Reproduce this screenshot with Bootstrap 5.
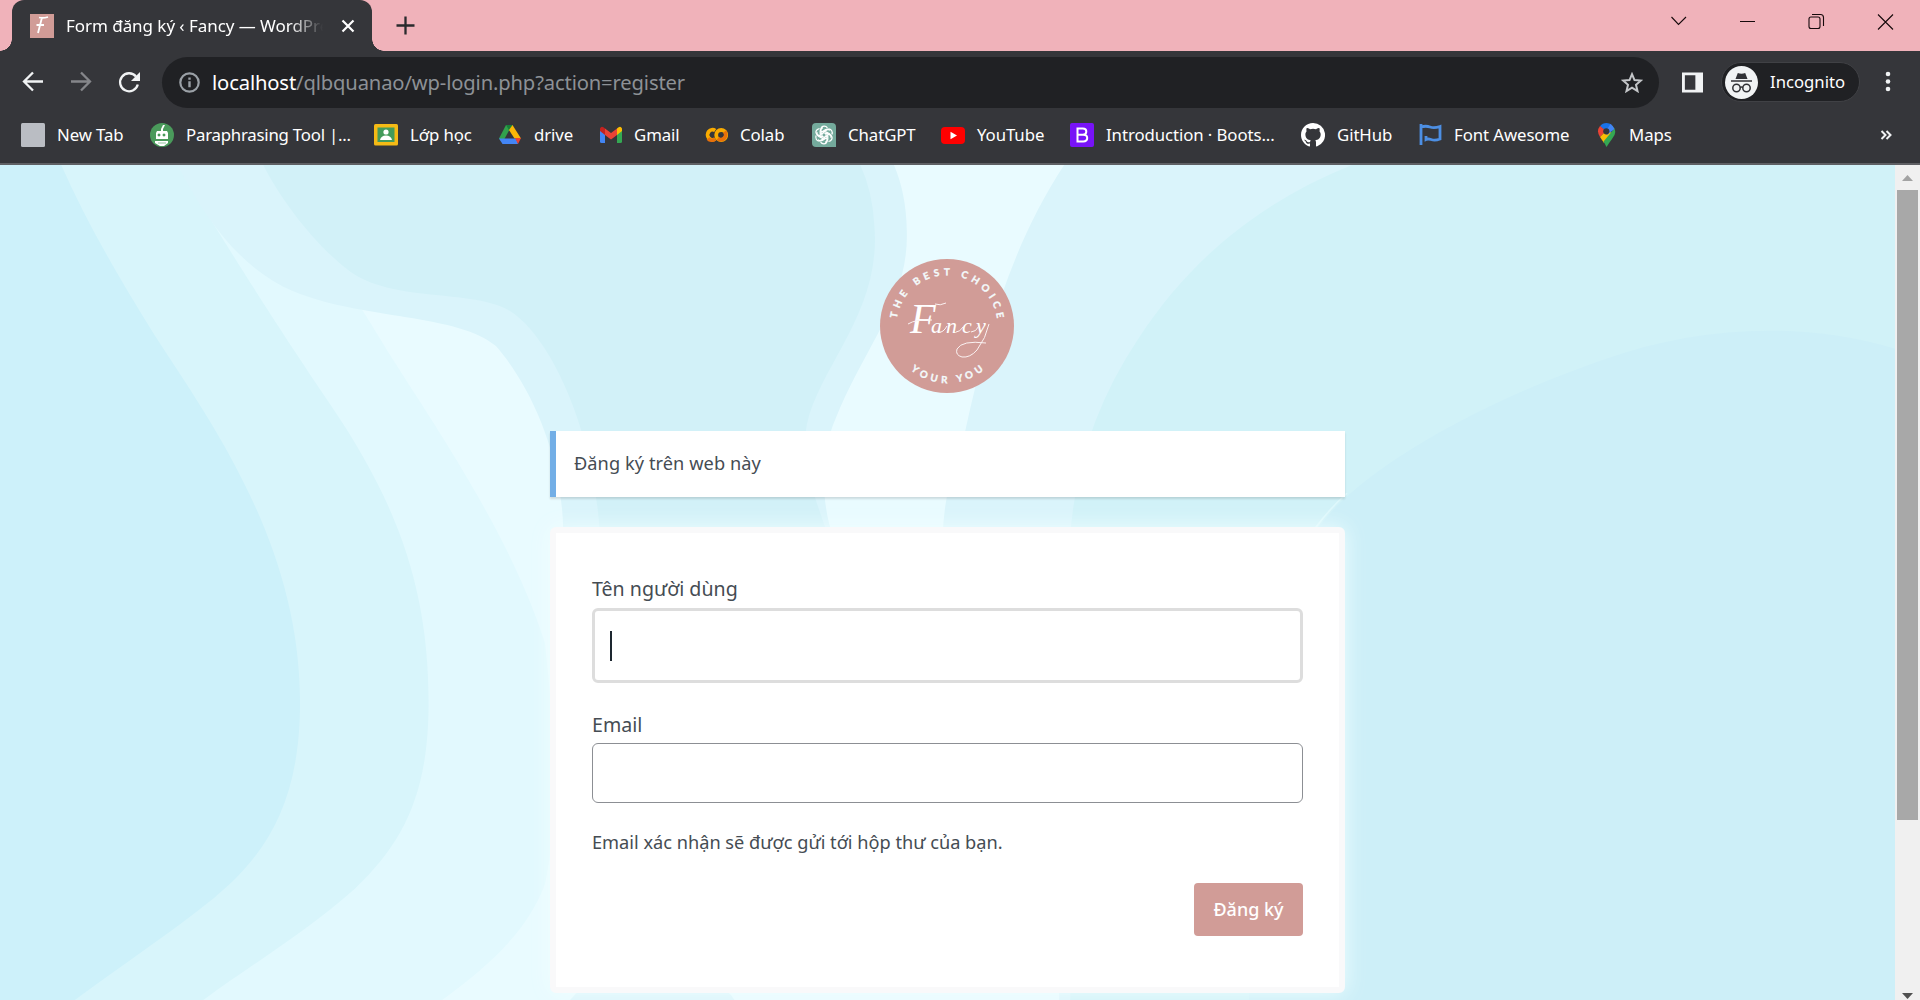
<!DOCTYPE html>
<html lang="vi">
<head>
<meta charset="utf-8">
<meta name="viewport" content="width=device-width, initial-scale=1">
<title>Form đăng ký ‹ Fancy — WordPress</title>
<link href="https://cdn.jsdelivr.net/npm/bootstrap@5.3.0/dist/css/bootstrap.min.css" rel="stylesheet">
<style>
html,body{height:1000px;overflow:hidden}
body{font-family:"Noto Sans","Open Sans",sans-serif;color:#454c53}
svg{display:block;flex:none}
.tabstrip{height:51px;background:#f0b2ba}
.tab-active{width:360px;height:51px;margin-left:12px;padding:0 17px 0 18px;background:#35363a;border-radius:12px 12px 0 0;position:relative}
.tab-active::before,.tab-active::after{content:"";position:absolute;bottom:0;width:12px;height:12px}
.tab-active::before{left:-12px;background:radial-gradient(circle at 0 0,transparent 11.5px,#35363a 12px)}
.tab-active::after{right:-12px;background:radial-gradient(circle at 100% 0,transparent 11.5px,#35363a 12px)}
.tab-title{width:257px;margin-left:12px;color:#fff;font-size:17px;letter-spacing:-.05px;line-height:50px;-webkit-mask-image:linear-gradient(90deg,#000 87%,transparent 100%);mask-image:linear-gradient(90deg,#000 87%,transparent 100%)}
.toolbar{height:62px;background:#35363a;padding-left:20px}
.omnibox{width:1497px;height:51px;margin-left:20px;background:#202124;border-radius:26px;padding:0 16px 0 17px;color:#9aa0a6;font-size:20.2px}
.url-text{margin-left:12px;padding-top:1px;letter-spacing:-.14px;color:#8d9196}
.url-text b{color:#fff;font-weight:400}
.panel-icon{margin-left:23px}
.incog{width:139px;height:40px;margin-left:18px;background:#202124;border:1px solid #404145;border-radius:20px;padding-left:3px;color:#fff;font-size:16.7px}
.bookmarks{height:51px;display:grid;grid-template-columns:129px 224px 124px 102px 104px 108px 129px 129px 231px 118px 178px 1fr auto;padding:0 28px 7px 21px;background:#35363a;color:#fff;font-size:16.8px;letter-spacing:-.08px}
.bookmarks>div{display:flex;align-items:center;gap:12px;white-space:nowrap}
.bookmarks>.bm-long{letter-spacing:-.22px}
.chrome-line{height:2px;margin-top:-1px;background:#5f6064;position:relative}
.viewport{height:835px}
.page{width:1895px;background:#e9fbff;position:relative;overflow:hidden}
.backdrop{position:absolute;inset:0;width:1895px;height:836px}
.login{position:relative;width:795px;margin-left:550px;padding-top:93px}
.brand-logo{margin-left:329px}
.notice{height:66px;margin-top:37px;border-left:6px solid #72aee6;background:#fff;box-shadow:0 2px 2px rgba(0,0,0,.13);padding-left:18px;font-size:18.2px;letter-spacing:.07px}
.regform{height:466px;margin-top:30px;border:6px solid #f9f9fa;border-radius:6px;background:#fff;box-shadow:0 0 22px rgba(240,255,255,.95);padding:40px 36px 0}
.regform label{display:block;font-size:19.6px;line-height:31px}
.regform .form-control{padding:3px 15px;border:1px solid #8c8f94;border-radius:6px;background:#fff;box-shadow:none}
.user-field{height:75px;margin-top:4px}
.regform .user-field{border:3px solid #ddd}
.mail-label{margin-top:26px}
.mail-field{height:60px;margin-top:3px}
.caret{width:2px;height:30px;background:#1d2730}
.note{font-size:18.2px;line-height:28px;margin-top:25px}
.btn-reg,.btn-reg:hover{width:109px;height:53px;margin-top:27px;background:#d19c97;color:#fff;border:0;border-radius:4px;font-size:18px;padding:0;font-weight:500}
.scroller{width:25px;background:#f0f0f0}
.thumb{width:21px;height:630px;background:#a8a8a8}
</style>
<script src="https://cdn.jsdelivr.net/npm/bootstrap@5.3.0/dist/js/bootstrap.bundle.min.js"></script>
</head>
<body>
<header>
  <div class="tabstrip d-flex">
    <div class="tab-active d-flex align-items-center">
      <svg width="24" height="24" viewBox="0 0 24 24"><path fill="#d19c97" d="M0 0h24v24H0z"/><path d="M9 3.500q4 1 9-.5M12 3.500 8 19M6.500 11H14" fill="none" stroke="#fff" stroke-width="1.800"/></svg>
      <div class="tab-title overflow-hidden text-nowrap">Form đăng ký ‹ Fancy — WordPress</div>
      <svg class="ms-auto" width="14" height="14" viewBox="0 0 14 14"><path d="m1.500 1.500 11 11m0-11-11 11" stroke="#fff" stroke-width="2.200"/></svg>
    </div>
    <svg class="align-self-center ms-4" width="19" height="19" viewBox="0 0 19 19"><path d="M9.500 .5v18M.5 9.500h18" stroke="#292a2d" stroke-width="2.300"/></svg>
    <div class="ms-auto d-flex align-items-center pb-2">
      <svg width="249" height="22" viewBox="0 0 249 22" fill="none" stroke="#16090b" stroke-width="1.100"><path d="m.5 6 7 7.500L15 6M69 10.500h15M207 3.500l15 15m0-15-15 15"/><rect x="138" y="6" width="11" height="11.500" rx="2"/><path d="M141 3.500h8.500q3 0 3 3V15"/></svg>
    </div>
  </div>
  <div class="toolbar d-flex align-items-center">
    <svg width="122" height="28" viewBox="0 0 122 28" fill="none" stroke-width="2.300"><path d="M23 13.500H4m9-9-9 9 9 9" stroke="#f1f3f4"/><path d="M51 13.500h19m-9-9 9 9-9 9" stroke="#85868a"/><path d="M116 8.500a9 9 0 1 0 1.800 8" stroke="#f1f3f4"/><path d="M120 4v9h-9z" fill="#f1f3f4"/></svg>
    <div class="omnibox d-flex align-items-center">
      <svg width="21" height="21" viewBox="0 0 21 21"><circle cx="10.500" cy="10.500" r="9.200" fill="none" stroke="#9aa0a6" stroke-width="2.200"/><path d="M9.300 9.300h2.400v6H9.300zM9.300 5.500h2.400v2.300H9.300z" fill="#9aa0a6"/></svg>
      <span class="url-text"><b>localhost</b>/qlbquanao/wp-login.php?action=register</span>
      <svg class="ms-auto" width="22" height="21" viewBox="0 0 22 21"><path d="m11 2.200 2.500 5.900 6.400.5-4.900 4.200 1.500 6.300-5.500-3.400-5.500 3.400L7 12.800 2.100 8.600l6.400-.5z" fill="none" stroke="#c4c6c9" stroke-width="2"/></svg>
    </div>
    <svg class="panel-icon" width="21" height="21" viewBox="0 0 22 21"><path d="M0 0h22v21H0zM3 3v15h11V3z" fill="#f1f3f4" fill-rule="evenodd"/></svg>
    <div class="incog d-flex align-items-center">
      <svg width="33" height="33" viewBox="0 0 33 33"><circle cx="16.500" cy="16.500" r="16.500" fill="#f1f3f4"/><g fill="#303135"><path d="m10.500 13 2.300-6q3.700 1.500 7.400 0l2.300 6zM6 14.200h21v1.500H6z"/></g><g fill="none" stroke="#303135" stroke-width="1.500"><circle cx="11.500" cy="22" r="3.700"/><circle cx="21.500" cy="22" r="3.700"/><path d="M15 21.500q1.500-1 3 0"/></g></svg>
      <span class="ms-2 ps-1">Incognito</span>
    </div>
    <svg class="ms-4" width="8" height="22" viewBox="0 0 8 22"><g fill="#f1f3f4"><circle cx="4" cy="3" r="2.300"/><circle cx="4" cy="10.500" r="2.300"/><circle cx="4" cy="18" r="2.300"/></g></svg>
  </div>
  <nav class="bookmarks">
    <div><svg width="24" height="24"><rect width="24" height="24" rx="1.500" fill="#babdc3"/></svg>New Tab</div>
    <div class="bm-long"><svg width="24" height="24" viewBox="0 0 24 24"><circle cx="12" cy="12" r="12" fill="#4a9a5b"/><path d="M11 8V6l2-4h2l-2 4v2h4l1 2v6H6v-6l1-2zM5 18h13v2l-4 3h-4l-5-3z" fill="#fff"/><path d="M8 11h2v2H8zm5 0h2v2h-2zM8 20h8" fill="#4a9a5b" stroke="#4a9a5b" stroke-width=".6"/></svg>Paraphrasing Tool |...</div>
    <div><svg width="24" height="22" viewBox="0 0 24 22"><rect width="24" height="21.500" rx="1.500" fill="#f5ba15"/><path d="M3.500 3.500h17v14.500h-17z" fill="#449b5a"/><circle cx="12" cy="8" r="2.600" fill="#fff"/><path d="M6 16q1-4.500 6-4.500t6 4.500z" fill="#fff"/></svg>Lớp học</div>
    <div><svg width="24" height="22" viewBox="0 0 24 22"><path d="M8 1h6L4.500 18.500 1 14.500z" fill="#31a24c"/><path d="M8 1h7l-3.500 6z" fill="#188038"/><path d="M14.500 1 23 14.500h-6.500L11 6z" fill="#fbb707"/><path d="M1 14.500h17L20 20H4.500z" fill="#4385f5"/><path d="M17 14h6l-3 6z" fill="#ea4335"/></svg>drive</div>
    <div><svg width="22" height="18" viewBox="0 0 22 18"><path d="M0 3h5v14H1.500Q0 17 0 15.500z" fill="#4285f4"/><path d="M17 3h5v12.500q0 1.500-1.500 1.500H17z" fill="#34a853"/><path d="M5 2.500 11 7l6-4.500V9l-6 4.500L5 9z" fill="#ea4335"/><path d="M0 5V2.500Q1.500-.8 5 2.500V9z" fill="#c5221f"/><path d="M22 5V2.500Q20.500-.8 17 2.500V9z" fill="#fbbc04"/></svg>Gmail</div>
    <div><svg width="24" height="16" viewBox="0 0 24 16" fill="none" stroke-width="3.800"><path d="M11.200 3.500A5 5 0 1 0 11.200 12" stroke="#f9ab00"/><circle cx="17.200" cy="8" r="5" stroke="#f9ab00"/><path d="M13.700 11.500a5 5 0 0 0 7-7" stroke="#e8710a"/><path d="M4 11.500a5 5 0 0 0 7 .5" stroke="#e8710a"/></svg>Colab</div>
    <div><svg width="24" height="24" viewBox="0 0 24 24"><path d="M4 0h16q4 0 4 4v20H4q-4 0-4-4V4q0-4 4-4" fill="#74aa9c"/><g fill="none" stroke="#fff" stroke-width="1.250"><path id="petal" d="M12.200 9.500 9 11.300V6.500q0-3.300 3.200-3.300 2 0 3.200 1.700M9.200 9.300l4.500-2.700q2.500-1 4.200.8"/><use href="#petal" transform="rotate(60 12 12)"/><use href="#petal" transform="rotate(120 12 12)"/><use href="#petal" transform="rotate(180 12 12)"/><use href="#petal" transform="rotate(240 12 12)"/><use href="#petal" transform="rotate(300 12 12)"/></g></svg>ChatGPT</div>
    <div><svg width="24" height="17" viewBox="0 0 24 17"><rect width="24" height="17" rx="4" fill="#f00"/><path d="m9.500 4.800 6.500 3.700-6.500 3.700z" fill="#fff"/></svg>YouTube</div>
    <div><svg width="24" height="24" viewBox="0 0 24 24"><rect width="24" height="24" rx="2" fill="#7813f7"/><path d="M7.500 5.500h5.300q3.500 0 3.500 3 0 3.200-3.500 3.200H7.500h5.700q4 0 4 3.400t-4 3.400H7.500z" fill="none" stroke="#fff" stroke-width="2"/></svg>Introduction · Boots...</div>
    <div><svg width="24" height="24" viewBox="0 0 16 16"><path fill="#fff" d="M8 0C3.580 0 0 3.580 0 8c0 3.540 2.290 6.530 5.470 7.590.4.070.55-.17.55-.38 0-.19-.01-.82-.01-1.490-2.010.37-2.530-.49-2.690-.94-.09-.23-.48-.94-.82-1.130-.28-.15-.68-.52-.01-.53.63-.01 1.080.58 1.230.82.72 1.210 1.870.87 2.330.66.07-.52.28-.87.51-1.070-1.780-.2-3.640-.89-3.640-3.950 0-.87.31-1.590.82-2.150-.08-.2-.36-1.020.08-2.120 0 0 .67-.21 2.200.82a7.600 7.600 0 0 1 4 0c1.530-1.040 2.200-.82 2.200-.82.44 1.100.16 1.920.08 2.120.51.56.82 1.270.82 2.150 0 3.070-1.870 3.750-3.650 3.950.29.25.54.73.54 1.480 0 1.070-.01 1.930-.01 2.200 0 .21.15.46.55.38A8 8 0 0 0 8 0"/></svg>GitHub</div>
    <div><svg width="23" height="22" viewBox="0 0 23 22"><path d="M2 0v21M2 3q5-1.500 9 0t10-.5V15q-5 2-9 .5-3-1-5 0V12" fill="none" stroke="#4d8fe3" stroke-width="2.800"/></svg>Font Awesome</div>
    <div><svg width="20" height="24" viewBox="0 0 20 24"><path d="M9.500 0A8.200 8.200 0 0 0 3 3.200l6.500 5.300 5-7q-2-1.500-5-1.500" fill="#1a73e8"/><path d="M3 3Q-1 8 3 14L9 8z" fill="#ea4335"/><path d="M3 14q2 3 4 6l9-10-7-2z" fill="#fbbc04"/><path d="M14 2q8 6 1 14-3 4-5.500 8Q8 21 6.500 18.500L17 6z" fill="#34a853"/><path d="M13.500 1q3 2 4 5L10 12l-1-4z" fill="#4285f4"/><circle cx="9.300" cy="8.300" r="3.100" fill="#35363a"/></svg><span>Maps</span></div>
    <div><svg width="12" height="10" viewBox="0 0 12 10"><path d="m1.500 1 4 4-4 4m5-8 4 4-4 4" fill="none" stroke="#f1f3f4" stroke-width="2"/></svg></div>
  </nav>
  <div class="chrome-line"></div>
</header>
<main class="viewport d-flex">
  <section class="page">
    <svg class="backdrop" viewBox="0 7 3095 1561" preserveAspectRatio="none">
      <path fill="#e2f9fe" d="M0 7H430C500 130 560 215 620 330S830 680 890 900C910 1100 910 1250 890 1350 860 1440 800 1500 720 1568H0z"/>
      <path fill="#d8f5fb" d="M0 7H290C350 120 430 270 540 455S700 800 700 1010C700 1180 660 1270 580 1358 500 1440 410 1500 330 1568H0z"/>
      <path fill="#cdf1fa" d="M0 7H100C140 110 190 210 250 320 340 480 490 710 490 1010 490 1190 440 1290 350 1375 280 1440 200 1500 120 1568H0z"/>
      <path fill="#daf4fb" d="M290 7C340 120 400 205 480 243 590 295 750 285 810 345 860 410 920 540 920 700L1360 700C1340 630 1340 545 1365 480 1410 350 1485 260 1481 130Q1480 60 1460 7z"/>
      <path fill="#d2f1f8" d="M430 7C460 75 515 155 565 200 630 262 750 240 820 272 890 305 970 490 980 700H1352C1340 650 1305 570 1318 490 1340 380 1440 280 1428 120Q1425 55 1405 7z"/>
      <path fill="#daf4fb" d="M1738 7C1650 160 1610 330 1576 506Q1540 620 1540 700V1568H3095V7z"/>
      <path fill="#d1f2f8" d="M2208 7C2050 80 1940 190 1860 330Q1760 500 1748 700V1568H3095V7z"/>
      <path fill="#cdeff8" d="M3095 350C2950 300 2780 305 2620 370 2440 440 2220 570 2150 690Q2060 820 2040 1568H3095z"/>
      <path d="M2145 690Q2170 650 2200 620" fill="none" stroke="#def8fc" stroke-width="3"/>
      <path fill="#daf4fb" d="M930 1568q15-25 40-25h205q20 10 25 25z"/>
      <path fill="#e9fbff" d="M1200 1540h530v28h-530z"/>
    </svg>
    <div class="login">
      <svg class="brand-logo" width="136" height="136" viewBox="0 0 136 136">
        <defs><path id="arcTop" d="M17.300 68A50.700 50.700 0 0 1 118.700 68"/><path id="arcBottom" d="M10.800 68A57.200 57.200 0 0 0 125.200 68"/></defs>
        <circle cx="68" cy="68" r="67" fill="#d19c97"/>
        <g fill="#f4fbfc" stroke="#f4fbfc" stroke-width=".35" font-family="Lato,sans-serif" font-weight="700" font-size="9.800" text-anchor="middle">
          <text><textPath href="#arcTop" startOffset="50%" textLength="144">THE BEST CHOICE</textPath></text>
          <text><textPath href="#arcBottom" startOffset="50%" textLength="79">YOUR YOU</textPath></text>
        </g>
        <text y="75" fill="#fff" font-family="Liberation Serif,serif" font-style="italic" font-size="22"><tspan x="31" font-size="42">F</tspan><tspan x="52 67 83 97">ancy</tspan></text>
        <path d="M29 66q8-5 24-4M56 46q5 2 11-1M60 74q4 1 8-6M77 74q4 0 7-5M92 74q5 0 8-6M110 66q-3 14-12 26-7 8-15 7-7-2-5-8 5-9 29-6" fill="none" stroke="#fbf2f2" stroke-width="1"/>
      </svg>
      <div class="notice d-flex align-items-center">Đăng ký trên web này</div>
      <form class="regform">
        <label>Tên người dùng</label>
        <div class="form-control user-field d-flex align-items-center"><div class="caret"></div></div>
        <label class="mail-label">Email</label>
        <div class="form-control mail-field"></div>
        <div class="note">Email xác nhận sẽ được gửi tới hộp thư của bạn.</div>
        <button type="button" class="btn btn-reg d-block ms-auto">Đăng ký</button>
      </form>
    </div>
  </section>
  <aside class="scroller d-flex flex-column align-items-center">
    <svg width="25" height="25" viewBox="0 0 25 25"><path d="m7 16 5.500-6 5.500 6z" fill="#a3a3a3"/></svg>
    <div class="thumb"></div>
    <svg class="mt-auto" width="25" height="8" viewBox="0 0 25 8"><path d="m7 1 5.500 6L18 1z" fill="#505050"/></svg>
  </aside>
</main>
</body>
</html>
